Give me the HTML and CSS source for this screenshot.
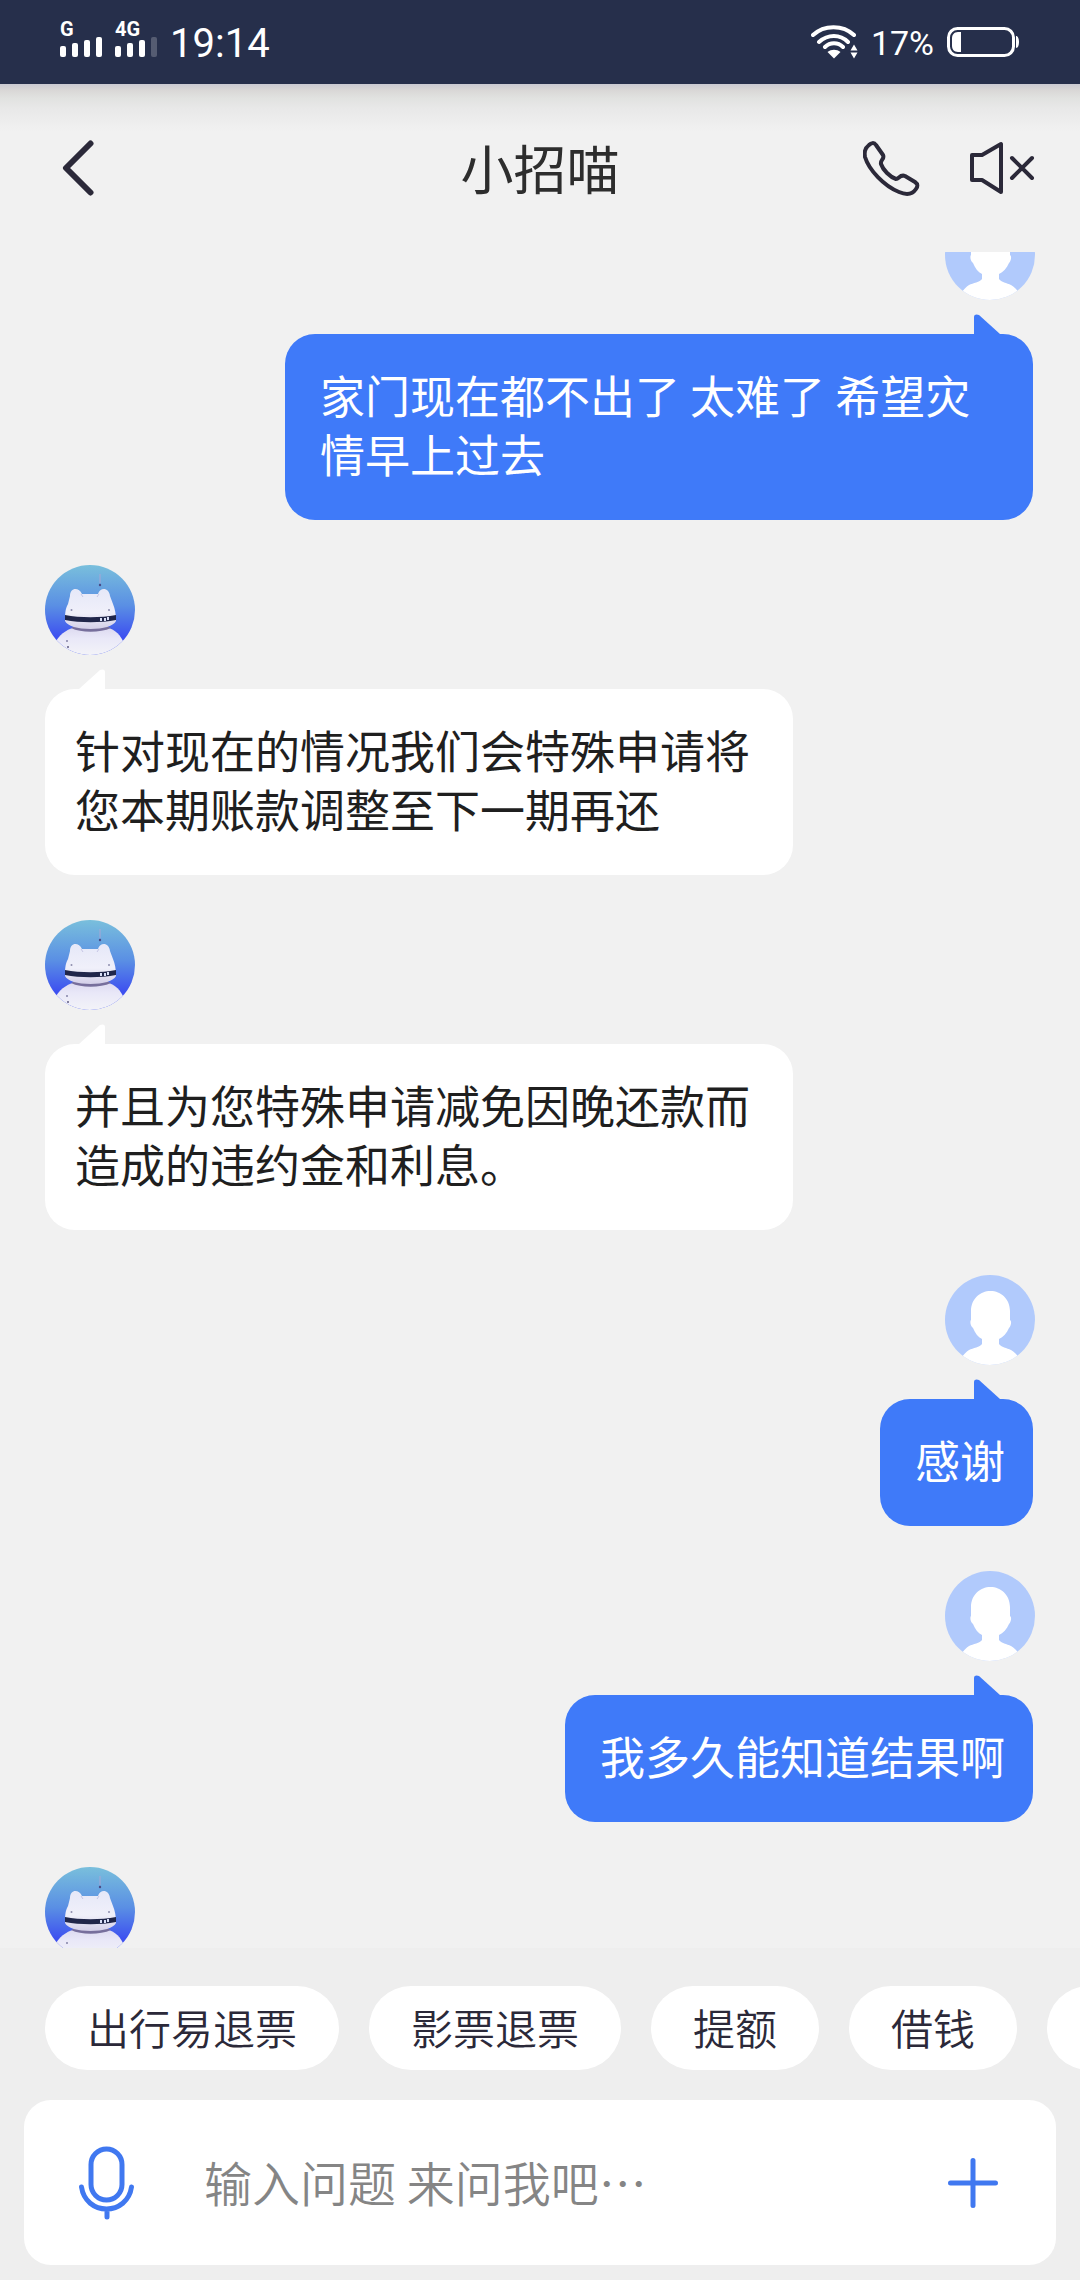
FILE: index.html
```html
<!DOCTYPE html>
<html lang="zh-CN">
<head>
<meta charset="utf-8">
<meta name="viewport" content="width=device-width, initial-scale=1">
<title>小招喵</title>
<link rel="stylesheet" href="styles.css">
</head>
<body>
<svg class="sprite" aria-hidden="true">
  <defs>
    <linearGradient id="sky" x1="0" y1="0" x2="0" y2="1">
      <stop offset="0" stop-color="#79bfdc"/>
      <stop offset="0.45" stop-color="#5a8fe4"/>
      <stop offset="0.8" stop-color="#3d50f0"/>
      <stop offset="1" stop-color="#3d50f0"/>
    </linearGradient>
    <linearGradient id="shell" x1="0" y1="0" x2="0" y2="1">
      <stop offset="0" stop-color="#e6e8f8"/>
      <stop offset="0.6" stop-color="#f0f0fa"/>
      <stop offset="1" stop-color="#d3cfe8"/>
    </linearGradient>
    <linearGradient id="torso" x1="0" y1="0" x2="0" y2="1">
      <stop offset="0" stop-color="#dcd9f0"/>
      <stop offset="0.4" stop-color="#e9e8f8"/>
      <stop offset="1" stop-color="#f3f3f8"/>
    </linearGradient>
    <clipPath id="round"><circle cx="45" cy="45" r="45"/></clipPath>
  </defs>
  <symbol id="bot" viewBox="0 0 90 90">
    <g clip-path="url(#round)">
      <rect width="90" height="90" fill="url(#sky)"/>
      <path d="M55 9v9" stroke="#a9a6d4" stroke-width="1"/>
      <circle cx="55" cy="20" r="1.2" fill="#4a4a86"/>
      <path d="M11 76C16 68 24 63 32 62h27c9 1 15 6 19 14l2 14H8z" fill="url(#torso)"/>
      <path d="M26 63c10 5 29 5 40 0l-6-3H32z" fill="#776f9c"/>
      <path d="M25 31c0-9 9-9 12-2h16c2-7 11-7 12 2l3 8c2 5 3 10 3 17-2 5-13 8-25.500 8S22 61 20 56c0-6 0-12 3-17z" fill="url(#shell)"/>
      <path d="M36 29l2 3M54 29l-2 3" stroke="#c5c5e4" stroke-width="1"/>
      <path d="M20 50c15 3 36 3 51 0v5c-15 3-36 3-51 0z" fill="#20264a"/>
      <path d="M56 53v3M60 53v3M63 52v3" stroke="#d8def6" stroke-width="2"/>
      <circle cx="26.500" cy="45" r="1" fill="#8f8fae"/>
      <circle cx="64" cy="45" r="1" fill="#8f8fae"/>
      <circle cx="22" cy="76" r="1" fill="#8583a8"/>
      <circle cx="23" cy="82" r="1" fill="#5f5d85"/>
    </g>
  </symbol>
  <symbol id="person" viewBox="0 0 90 90">
    <g clip-path="url(#round)">
      <rect width="90" height="90" fill="#b1cafc"/>
      <path d="M45.500 16C56 16 65 24 65 36v9c2 1 1 6-1 8-2 5-6 9-10 11v5c2 3 8 4 12 6 3 2 6 4 7 7l2 8H16l1-8c2-3 4-5 7-7 4-2 11-3 13-6v-5c-4-2-7-6-9-11-3-2-3-7-2-8v-9c0-12 9-20 19.500-20z" fill="#fff"/>
    </g>
  </symbol>
  <symbol id="tail" viewBox="0 0 26 20">
    <path d="M0 20V3C0 0 3 0 5 1L26 20z" fill="currentColor"/>
  </symbol>
</svg>

<div class="app">
  <div class="status">
    <div class="status-side">
      <div class="signal">
        <span class="net">G</span>
        <svg width="42" height="20" viewBox="0 0 42 20" fill="#fff"><rect y="9" width="6" height="11" rx="2"/><rect x="12" y="6" width="6" height="14" rx="2"/><rect x="24" y="3" width="6" height="17" rx="2"/><rect x="36" width="6" height="20" rx="2"/></svg>
      </div>
      <div class="signal">
        <span class="net">4G</span>
        <svg width="42" height="20" viewBox="0 0 42 20" fill="#fff"><rect y="9" width="6" height="11" rx="2"/><rect x="12" y="6" width="6" height="14" rx="2"/><rect x="24" y="3" width="6" height="17" rx="2"/><rect x="36" width="6" height="20" rx="2" opacity="0.22"/></svg>
      </div>
      <time class="clock">19:14</time>
    </div>
    <div class="status-side">
      <svg width="47" height="34" viewBox="0 0 47 34" fill="none" stroke="#fff" stroke-width="4" stroke-linecap="round">
        <path d="M2 10C13-.5 32-.5 43 10M8 17c9-8 21-8 29 0M14 22c5-5 13-5 18 0" />
        <path d="M16.500 27c4-3 9-3 13 0L23 33.500z" fill="#fff" stroke="none"/>
        <path d="M39.500 25.500l3.500-6 3.500 6zM39.500 27.500l3.500 6 3.500-6z" fill="#fff" stroke="none"/>
      </svg>
      <span class="percent">17%</span>
      <svg width="73" height="30" viewBox="0 0 73 30">
        <rect x="1.500" y="1.500" width="65" height="27" rx="9" fill="none" stroke="#fff" stroke-width="3"/>
        <path d="M14 5v20h-3c-4 0-6-3-6-6v-8c0-3 2-6 6-6z" fill="#fff"/>
        <path d="M69 9c2 0 3 3 3 6s-1 6-3 6z" fill="#fff"/>
      </svg>
    </div>
  </div>

  <header class="header">
    <button class="icon-button" type="button" aria-label="返回">
      <svg width="32" height="56" viewBox="0 0 32 56" fill="none" stroke="#2b2939" stroke-width="6" stroke-linecap="round" stroke-linejoin="round"><path d="M28.500 3.500L4 28l24.500 24.500"/></svg>
    </button>
    <h1 class="title">小招喵</h1>
    <div class="actions">
      <button class="icon-button" type="button" aria-label="电话">
        <svg width="58" height="56" viewBox="0 0 58 56" fill="none" stroke="#2b2939" stroke-width="4" stroke-linejoin="round"><path d="M6 5C8 3 11 2 13 5l7 10c2 4-3 5-2 9 2 6 9 13 15 15 3 0 4-5 9-3l10 6c3 2 3 4 1 7-4 6-10 6-17 3C21 46 6 30 2 17c-1-5 0-9 4-12z"/></svg>
      </button>
      <button class="icon-button" type="button" aria-label="静音">
        <svg width="66" height="56" viewBox="0 0 66 56" fill="none" stroke="#2b2939" stroke-width="4" stroke-linejoin="round"><path d="M3 15h10l19-11v48L13 40H3z"/><path d="M43 18l20 20M63 18L43 38" stroke-linecap="round"/></svg>
      </button>
    </div>
  </header>

  <main class="chat">
    <ol class="messages">
      <li class="message user">
        <svg class="avatar" role="img" aria-label="我"><use href="#person"/></svg>
        <div class="bubble"><svg class="tail" aria-hidden="true"><use href="#tail"/></svg><p>家门现在都不出了 太难了 希望灾情早上过去</p></div>
      </li>
      <li class="message agent">
        <svg class="avatar" role="img" aria-label="小招喵"><use href="#bot"/></svg>
        <div class="bubble"><svg class="tail" aria-hidden="true"><use href="#tail"/></svg><p>针对现在的情况我们会特殊申请将您本期账款调整至下一期再还</p></div>
      </li>
      <li class="message agent">
        <svg class="avatar" role="img" aria-label="小招喵"><use href="#bot"/></svg>
        <div class="bubble"><svg class="tail" aria-hidden="true"><use href="#tail"/></svg><p>并且为您特殊申请减免因晚还款而造成的违约金和利息。</p></div>
      </li>
      <li class="message user">
        <svg class="avatar" role="img" aria-label="我"><use href="#person"/></svg>
        <div class="bubble"><svg class="tail" aria-hidden="true"><use href="#tail"/></svg><p>感谢</p></div>
      </li>
      <li class="message user">
        <svg class="avatar" role="img" aria-label="我"><use href="#person"/></svg>
        <div class="bubble"><svg class="tail" aria-hidden="true"><use href="#tail"/></svg><p>我多久能知道结果啊</p></div>
      </li>
      <li class="message agent">
        <svg class="avatar" role="img" aria-label="小招喵"><use href="#bot"/></svg>
      </li>
    </ol>
  </main>

  <footer class="footer">
    <div class="chips">
      <button class="chip" type="button">出行易退票</button>
      <button class="chip" type="button">影票退票</button>
      <button class="chip" type="button">提额</button>
      <button class="chip" type="button">借钱</button>
      <button class="chip" type="button" aria-label="更多"></button>
    </div>
    <form class="composer">
      <button class="icon-button" type="button" aria-label="语音输入">
        <svg width="56" height="74" viewBox="0 0 56 74" fill="none" stroke="#4078f0" stroke-width="5" stroke-linecap="round"><rect x="12" y="3" width="31" height="51" rx="15.500"/><path d="M2.500 41c2 14 13 22 25 22s23-8 25-22M28 64v7"/></svg>
      </button>
      <input class="question" type="text" aria-label="输入问题" placeholder="输入问题 来问我吧…">
      <button class="icon-button" type="button" aria-label="添加">
        <svg width="50" height="50" viewBox="0 0 50 50" fill="none" stroke="#4078f0" stroke-width="5" stroke-linecap="round"><path d="M25 2.500v45M2.500 25h45"/></svg>
      </button>
    </form>
  </footer>
</div>
</body>
</html>
```

FILE: styles.css
```css
* {
  box-sizing: border-box;
}

body {
  margin: 0;
  background: #f1f1f1;
  color: #1f1f1f;
  font-family: "Noto Sans CJK SC", sans-serif;
}

svg {
  display: block;
  flex: none;
}

button {
  border: 0;
  background: none;
  color: inherit;
  font: inherit;
}

.sprite {
  position: absolute;
  width: 0;
  height: 0;
}

.app {
  display: flex;
  flex-direction: column;
  height: 100vh;
}

/* Status bar */
.status {
  display: flex;
  justify-content: space-between;
  flex: none;
  height: 84px;
  padding: 0 60px;
  background: #262f4b;
  color: #fff;
  font-family: Roboto, sans-serif;
}

.status-side {
  display: flex;
  align-items: center;
  gap: 13px;
}

.signal {
  display: flex;
  flex-direction: column;
  padding-bottom: 6px;
}

.net {
  font-size: 20px;
  font-weight: 700;
  line-height: 16px;
}

.clock {
  padding-top: 4px;
  font-size: 40px;
  line-height: 48px;
}

.percent {
  padding-top: 2px;
  font-size: 34px;
  line-height: 40px;
}

/* Header */
.header {
  display: grid;
  grid-template-columns: 1fr auto 1fr;
  align-items: center;
  flex: none;
  height: 168px;
  padding: 0 45px;
  background: linear-gradient(#cacad2 0, #d9d7d6 6px, #e1e2e0 14px, #e8e8e8 24px, #efefef 42px, #f1f1f1 48px);
}

.icon-button {
  display: flex;
  padding: 0;
}

.header > .icon-button {
  padding-left: 17px;
}

.title {
  margin: 0;
  padding-bottom: 2px;
  color: #2d2d2d;
  font-size: 53px;
  font-weight: 400;
  line-height: 80px;
}

.actions {
  display: flex;
  justify-content: flex-end;
  gap: 48px;
}

/* Conversation */
.chat {
  flex: 1;
  min-height: 0;
  overflow: hidden;
  padding: 0 45px;
}

.messages {
  display: flex;
  flex-direction: column;
  gap: 45px;
  margin: -42px 0 0;
  padding: 0;
  list-style: none;
}

.message {
  display: flex;
  flex-direction: column;
  align-items: flex-start;
  gap: 34px;
}

.user {
  align-items: flex-end;
}

.avatar {
  width: 90px;
  height: 90px;
}

.bubble {
  position: relative;
  max-width: 748px;
  border-radius: 30px;
  font-size: 45px;
  line-height: 59px;
}

.bubble p {
  margin: 0;
}

.agent .bubble {
  padding: 31px 28px 37px 30px;
  background: #fff;
}

.user .bubble {
  margin-right: 2px;
  padding: 31px 28px 37px 35px;
  background: #3f7af9;
  color: #fff;
}

.tail {
  position: absolute;
  bottom: 100%;
  width: 26px;
  height: 20px;
}

.agent .tail {
  left: 34px;
  color: #fff;
  transform: scaleX(-1);
}

.user .tail {
  right: 33px;
  color: #3f7af9;
}

/* Quick questions and input */
.footer {
  flex: none;
  padding: 38px 24px 15px;
  background: #eee;
}

.chips {
  display: flex;
  gap: 30px;
  margin: 0 -24px 30px;
  padding-left: 45px;
  overflow: hidden;
}

.chip {
  flex: none;
  min-width: 168px;
  height: 84px;
  padding: 0 42px 2px;
  border-radius: 42px;
  background: #fff;
  color: #2b2939;
  font-size: 42px;
  font-weight: 350;
  line-height: 60px;
}

.composer {
  display: flex;
  align-items: center;
  height: 165px;
  padding: 0 58px 0 55px;
  border-radius: 27px;
  background: #fff;
}

.question {
  flex: 1;
  min-width: 0;
  margin-left: 69px;
  padding: 0 0 3px;
  border: 0;
  outline: 0;
  background: none;
  color: #1f1f1f;
  font: 350 48px/72px "Noto Sans CJK SC", sans-serif;
}

.question::placeholder {
  color: #858585;
  opacity: 1;
}
```
